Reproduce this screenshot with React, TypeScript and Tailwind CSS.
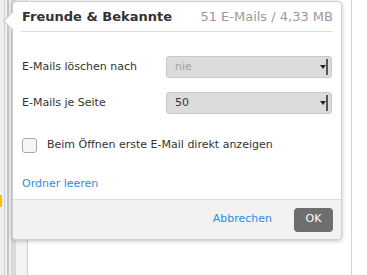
import React from "react";

const font = { fontFamily: '"DejaVu Sans", Verdana, sans-serif' };

const Select = ({ value, disabled }: { value: string; disabled?: boolean }) => (
  <div className="flex h-[22px] w-[166px] items-center justify-between rounded-[3px] border border-[#c8c8c8] bg-[#dcdcdc] pl-2 pr-[3px]">
    <span className={disabled ? "text-[11px] text-[#a0a0a0]" : "text-[11px] text-[#333]"}>{value}</span>
    <span className="flex h-[16px] w-[8px] items-center justify-center border-r-2 border-[#555]">
      <svg width="6" height="4" viewBox="0 0 6 4">
        <path d="M0 0H6L3 4Z" fill="#222" />
      </svg>
    </span>
  </div>
);

export default function App() {
  return (
    <div className="relative h-[275px] w-[367px] overflow-hidden bg-white" style={font}>
      {/* page behind the popup */}
      <div className="flex h-full">
        <div className="relative w-[12px] border-r border-[#d6d6d6] bg-[#efefef]">
          <div className="absolute left-[4px] top-0 h-full w-px bg-[#cfcfcf]" />
          <div className="absolute left-[7px] top-0 h-full w-[2px] bg-[#c4c4c4]" />
          <div className="absolute left-0 top-[195px] h-[12px] w-[2px] bg-[#f5c400]" />
        </div>
        <div className="w-[4px] bg-[#d9d9d9]" />
        <div className="w-[12px] border-r border-[#cfcfcf] bg-[#f3f3f3]" />
        <div className="w-[324px] border-r border-[#d4d4d4] bg-white" />
      </div>

      {/* popup */}
      <div className="absolute left-[12px] top-[1px] flex h-[239px] w-[330px] flex-col rounded-[4px] border border-[#d0d0d0] bg-white shadow-[0_1px_4px_rgba(0,0,0,0.25)]">
        <div className="absolute left-[-7px] top-[12px] h-[14px] w-[14px] rotate-45 border-b border-l border-[#c8c8c8] bg-white" />
        <div className="relative mx-[8px] flex h-[30px] items-end justify-between border-b border-[#dcdcdc] pb-[5px] pl-px">
          <span className="text-[13px] font-bold text-[#333]">Freunde &amp; Bekannte</span>
          <span className="text-[13px] text-[#9a9a9a]">51 E-Mails / 4,33 MB</span>
        </div>

        <div className="flex flex-col px-[9px] pt-[24px]">
          <div className="flex items-center justify-between">
            <span className="text-[11px] text-[#333]">E-Mails löschen nach</span>
            <Select value="nie" disabled />
          </div>
          <div className="mt-[14px] flex items-center justify-between">
            <span className="text-[11px] text-[#333]">E-Mails je Seite</span>
            <Select value="50" />
          </div>
          <div className="mt-[23px] flex items-center gap-[10px]">
            <div className="h-[15px] w-[15px] rounded-[3px] border border-[#a8a8a8] bg-[#f6f6f6]" />
            <span className="text-[11px] text-[#333]">Beim Öffnen erste E-Mail direkt anzeigen</span>
          </div>
          <span className="mt-[22px] text-[11px] text-[#2a8ee0]">Ordner leeren</span>
        </div>

        <div className="mt-auto flex h-[40px] items-center justify-end gap-[22px] rounded-b-[4px] border-t border-[#dcdcdc] bg-[#f2f2f2] pr-[8px]">
          <span className="text-[11px] text-[#2a8ee0]">Abbrechen</span>
          <div className="flex h-[24px] w-[39px] items-center justify-center rounded-[4px] bg-[#6e6e6e] text-[11px] text-white">
            OK
          </div>
        </div>
      </div>
    </div>
  );
}
